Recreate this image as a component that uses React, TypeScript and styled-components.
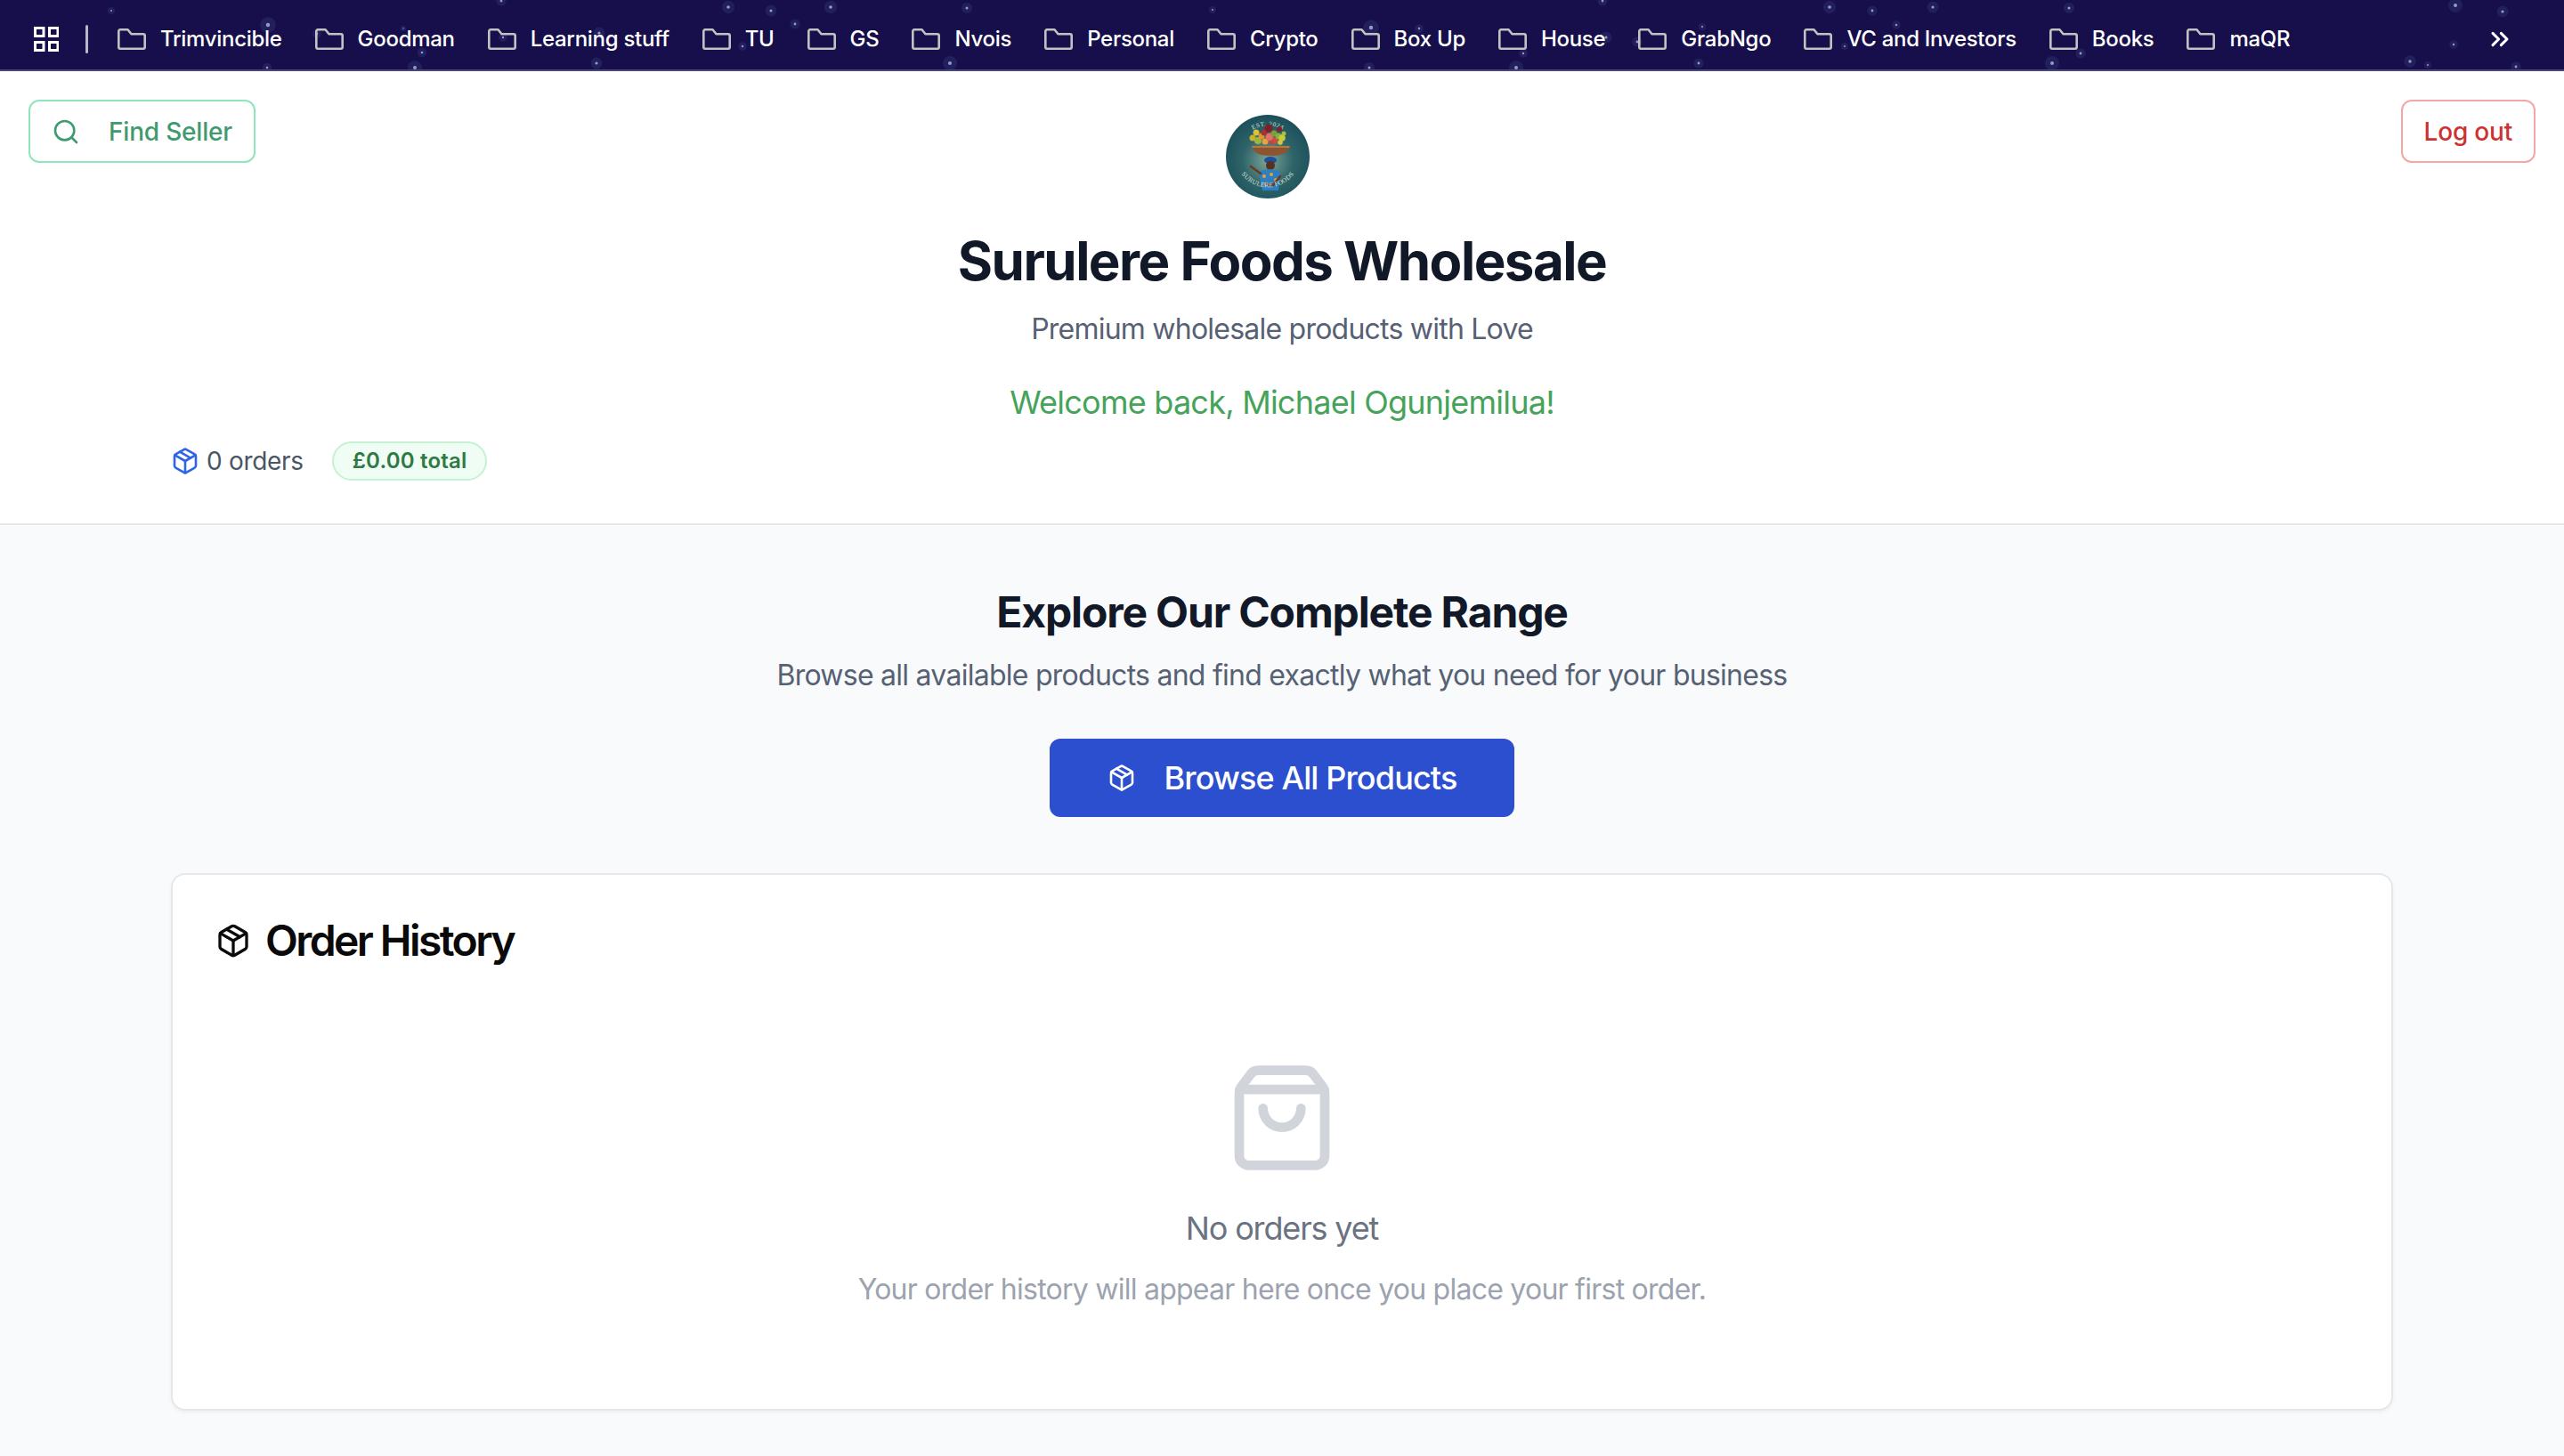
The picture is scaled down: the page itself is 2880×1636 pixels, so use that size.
import React from 'react';
import styled, { createGlobalStyle } from 'styled-components';
import { ChevronsRight, Package, Search, ShoppingBag } from 'lucide-react';

const Global = createGlobalStyle`
  html, body { margin: 0; padding: 0; height: 100%; background: #f9fafb; }
  body { font-family: Inter, "Liberation Sans", sans-serif; overflow: hidden; -webkit-font-smoothing: antialiased; }
  * { box-sizing: border-box; }
`;

const Page = styled.div`
  display: flex;
  flex-direction: column;
  height: 1636px;
  background: #f9fafb;
`;

const BookmarkBar = styled.nav`
  position: relative;
  flex: none;
  display: flex;
  align-items: center;
  height: 80px;
  padding: 10px 38px 0;
  background: #170f4b;
  border-bottom: 2px solid #4c4672;
  overflow: hidden;
`;

const StarField = styled.svg`
  position: absolute;
  inset: 0;
  width: 2880px;
  height: 78px;
`;

const AppsIcon = styled.svg`
  position: relative;
  flex: none;
`;

const Divider = styled.span`
  position: relative;
  flex: none;
  width: 3px;
  height: 32px;
  margin: 0 33px 0 30px;
  border-radius: 2px;
  background: #b9b7c9;
`;

const Bookmarks = styled.div`
  position: relative;
  display: flex;
  align-items: center;
  gap: 37px;
`;

const Bookmark = styled.a`
  display: flex;
  align-items: center;
  gap: 16px;
  color: #fff;
  font-size: 24px;
  line-height: 32px;
  font-weight: 500;
  letter-spacing: -0.29px;
  white-space: nowrap;
`;

const FolderIcon = styled.svg`
  flex: none;
`;

const OverflowIcon = styled(ChevronsRight)`
  position: absolute;
  right: 56px;
  top: 28px;
  color: #fff;
`;

const Header = styled.header`
  flex: none;
  height: 510px;
  padding: 32px 32px 0;
  background: #fff;
  border-bottom: 2px solid #e5e7eb;
`;

const HeaderTop = styled.div`
  display: grid;
  grid-template-columns: 1fr auto 1fr;
  align-items: start;
`;

const OutlineButton = styled.button<{ $tone: 'green' | 'red' }>`
  display: inline-flex;
  align-items: center;
  gap: 32px;
  height: 71px;
  padding: 0 24px;
  background: #fff;
  border: 2px solid ${p => (p.$tone === 'green' ? '#8fe6bd' : '#f5a6a6')};
  border-radius: 12px;
  color: ${p => (p.$tone === 'green' ? '#3f9a6e' : '#cd3232')};
  font: 500 28px/40px Inter, sans-serif;
  letter-spacing: -0.2px;
`;

const RightSlot = styled.div`
  display: flex;
  justify-content: flex-end;
`;

const Brand = styled.div`
  display: flex;
  flex-direction: column;
  align-items: center;
  padding-top: 16px;
`;

const LogoMark = styled.svg`
  display: block;
  margin-right: 32px;
  margin-bottom: 33px;
`;

const Title = styled.h1`
  margin: 0;
  color: #111827;
  font-size: 60px;
  line-height: 72px;
  font-weight: 700;
  letter-spacing: -1.52px;
`;

const Tagline = styled.p`
  margin: 17px 0 0;
  color: #566173;
  font-size: 32px;
  line-height: 48px;
  letter-spacing: -0.77px;
`;

const Welcome = styled.p`
  margin: 34px 0 0;
  color: #46a35a;
  font-size: 36px;
  line-height: 48px;
  font-weight: 400;
  letter-spacing: -0.76px;
`;

const Stats = styled.div`
  display: flex;
  align-items: center;
  margin: 20px 0 0 160px;
  height: 44px;
`;

const OrderCount = styled.span`
  display: flex;
  align-items: center;
  gap: 8px;
  color: #4b5563;
  font-size: 28px;
  line-height: 40px;
  letter-spacing: -0.3px;
`;

const BlueBox = styled(Package)`
  color: #2f63ea;
`;

const TotalBadge = styled.span`
  display: inline-flex;
  align-items: center;
  height: 44px;
  margin-left: 32px;
  padding: 0 21px;
  border: 2px solid #c4f2d2;
  border-radius: 22px;
  background: #f0fdf4;
  color: #2f7a44;
  font-size: 24px;
  line-height: 32px;
  font-weight: 600;
  letter-spacing: 0.2px;
`;

const Main = styled.main`
  flex: 1;
  display: flex;
  flex-direction: column;
  align-items: center;
  padding: 0 192px;
`;

const Explore = styled.h2`
  margin: 66px 0 0;
  color: #111827;
  font-size: 48px;
  line-height: 64px;
  font-weight: 700;
  letter-spacing: -1.15px;
`;

const ExploreText = styled.p`
  margin: 15px 0 0;
  color: #566173;
  font-size: 32px;
  line-height: 48px;
  letter-spacing: -0.74px;
`;

const PrimaryButton = styled.button`
  display: flex;
  align-items: center;
  gap: 32px;
  height: 88px;
  margin-top: 47px;
  padding: 0 65px;
  border: 0;
  border-radius: 12px;
  background: #2c4fd0;
  color: #fff;
  font: 500 36px/48px Inter, sans-serif;
  letter-spacing: -0.87px;
`;

const HistoryCard = styled.section`
  align-self: stretch;
  display: flex;
  flex-direction: column;
  height: 604px;
  margin-top: 63px;
  padding: 48px;
  background: #fff;
  border: 2px solid #e5e7eb;
  border-radius: 16px;
  box-shadow: 0 2px 4px rgba(0, 0, 0, 0.05);
`;

const CardTitle = styled.h3`
  display: flex;
  align-items: center;
  gap: 16px;
  margin: 0;
  color: #0a0a0a;
  font-size: 48px;
  line-height: 52px;
  font-weight: 600;
  letter-spacing: -2.6px;
`;

const Empty = styled.div`
  display: flex;
  flex-direction: column;
  align-items: center;
  padding-top: 109px;
`;

const EmptyIcon = styled(ShoppingBag)`
  color: #d1d5db;
`;

const EmptyTitle = styled.p`
  margin: 36px 0 0;
  color: #6b7280;
  font-size: 36px;
  line-height: 48px;
  font-weight: 400;
  letter-spacing: -1.16px;
`;

const EmptyText = styled.p`
  margin: 21px 0 0;
  color: #9ca3af;
  font-size: 32px;
  line-height: 48px;
  letter-spacing: -0.75px;
`;

const bookmarks = ['Trimvincible', 'Goodman', 'Learning stuff', 'TU', 'GS', 'Nvois', 'Personal', 'Crypto', 'Box Up', 'House', 'GrabNgo', 'VC and Investors', 'Books', 'maQR'];

const stars: [number, number, number][] = [
  [301, 28, 2.2], [125, 12, 1], [563, 1, 1.4], [818, 8, 1.8], [866, 12, 1.6], [893, 27, 1.4], [356, 38, 1.2], [565, 42, 1.2], [673, 37, 1.6],
  [474, 59, 1.3], [466, 76, 2], [300, 76, 1.3], [670, 71, 1.6], [834, 52, 1.2], [453, 32, 0.8],
  [933, 8, 1.8], [1086, 9, 1.5], [1362, 11, 1], [1800, 1, 1.4], [1540, 31, 2.2], [1594, 32, 1.2], [1067, 71, 2], [1538, 76, 1.5], [1703, 76, 2],
  [1711, 60, 1.2], [1804, 42, 1.6], [1839, 47, 1.4],
  [2055, 8, 1.8], [2103, 12, 1.4], [2171, 8, 1.6], [2324, 9, 1.5], [2758, 6, 2], [2811, 13, 1.6], [2130, 28, 1.2], [2072, 52, 1], [1908, 71, 1.4],
  [2305, 71, 2], [2337, 60, 1.4], [2756, 50, 1.2], [2707, 69, 1.7], [2727, 73, 1], [2826, 75, 1.4], [1912, 30, 1],
];

const fruits: [number, number, number, string][] = [
  [31, 27, 3.5, '#c9b32e'], [35, 21, 3.5, '#d8c23a'], [37, 30, 4, '#9fb53b'], [41, 25, 3.5, '#e0962f'], [45, 31, 3.5, '#e8a33a'],
  [44, 21, 3.5, '#a7322e'], [49, 16, 4.5, '#7f1f2a'], [50, 26, 4.5, '#e36f6a'], [55, 22, 3.5, '#7f9d3a'], [56, 30, 3.5, '#c9503f'],
  [60, 25, 3.5, '#8cae3a'], [61, 17, 3, '#7d2230'], [64, 27, 3.8, '#c7cc3f'], [66, 22, 2.5, '#a9bf3d'], [62, 32, 2.8, '#d9c83f'], [52, 32, 2.5, '#c4463e'],
];

function Logo() {
  return (
    <LogoMark width={96} height={96} viewBox="0 0 96 96">
      <defs>
        <radialGradient id="logoBg" cx="50%" cy="55%" r="55%">
          <stop offset="0%" stopColor="#7ea597" />
          <stop offset="55%" stopColor="#2f6469" />
          <stop offset="100%" stopColor="#1c4f5b" />
        </radialGradient>
        <path id="logoTop" d="M26 22 A32 32 0 0 1 70 22" />
        <path id="logoBottom" d="M12 54 A37 37 0 0 0 84 54" />
      </defs>
      <circle cx="48" cy="48" r="47" fill="url(#logoBg)" />
      <text fontFamily="Liberation Serif, serif" fontSize="7" fill="#d6e2d8" letterSpacing="0.6">
        <textPath href="#logoTop" startOffset="50%" textAnchor="middle">EST. 2024</textPath>
      </text>
      {fruits.map(([cx, cy, r, fill]) => (
        <circle key={`${cx}-${cy}`} cx={cx} cy={cy} r={r} fill={fill} />
      ))}
      <path d="M30 36 H73 C71 44 64 47 52 47 C39 47 32 44 30 36Z" fill="#8c5430" />
      <path d="M30 36 H73 L72 38 H31Z" fill="#b57a44" />
      <ellipse cx="51" cy="52" rx="7" ry="4" fill="#1c4f9c" />
      <circle cx="51" cy="58" r="5" fill="#5b2f1e" />
      <path d="M38 66 C42 61 58 61 62 66 L60 86 L42 86Z" fill="#2e7fc0" />
      <path d="M40 67 L33 62 L29 59" fill="none" stroke="#6b3a22" strokeWidth="2.6" strokeLinecap="round" />
      <circle cx="44" cy="70" r="2" fill="#e0a33a" />
      <circle cx="52" cy="68" r="2" fill="#e0a33a" />
      <circle cx="57" cy="74" r="2" fill="#e0a33a" />
      <circle cx="46" cy="79" r="2" fill="#e0a33a" />
      <path d="M62 70 L54 80 L46 79" fill="none" stroke="#6b3a22" strokeWidth="2.6" strokeLinecap="round" />
      <text fontFamily="Liberation Serif, serif" fontSize="7.4" fill="#d6e2d8" letterSpacing="0.3">
        <textPath href="#logoBottom" startOffset="50%" textAnchor="middle">SURULERE FOODS</textPath>
      </text>
    </LogoMark>
  );
}

function Apps() {
  return (
    <AppsIcon width={28} height={28} viewBox="0 0 28 28" fill="none" stroke="#fff" strokeWidth="3">
      <rect x="1.5" y="1.5" width="9.5" height="9" />
      <rect x="17.5" y="1.5" width="9.5" height="9" />
      <rect x="1.5" y="17.5" width="9.5" height="9" />
      <rect x="17.5" y="17.5" width="9.5" height="9" />
    </AppsIcon>
  );
}

function BookmarkFolder() {
  return (
    <FolderIcon width={32} height={24} viewBox="0 0 32 24" fill="none" stroke="#c2c2c2" strokeWidth="2.6" strokeLinejoin="round">
      <path d="M1.3 3 A1.7 1.7 0 0 1 3 1.3 H11.5 L15.5 6.3 H29 A1.7 1.7 0 0 1 30.7 8 V21 A1.7 1.7 0 0 1 29 22.7 H3 A1.7 1.7 0 0 1 1.3 21 Z" />
    </FolderIcon>
  );
}

export default function App() {
  return (
    <Page>
      <Global />
      <BookmarkBar>
        <StarField viewBox="0 0 2880 78">
          {stars.map(([x, y, r]) => (
            <g key={`${x}-${y}`}>
              <circle cx={x} cy={y} r={r * 4} fill="#5b6bb5" opacity={0.18} />
              <circle cx={x} cy={y} r={r} fill="#c6cbe6" opacity={0.72} />
            </g>
          ))}
        </StarField>
        <Apps />
        <Divider />
        <Bookmarks>
          {bookmarks.map(name => (
            <Bookmark key={name}>
              <BookmarkFolder />
              {name}
            </Bookmark>
          ))}
        </Bookmarks>
        <OverflowIcon size={32} strokeWidth={3} absoluteStrokeWidth />
      </BookmarkBar>
      <Header>
        <HeaderTop>
          <div>
            <OutlineButton $tone="green">
              <Search size={32} strokeWidth={2.6} absoluteStrokeWidth />
              Find Seller
            </OutlineButton>
          </div>
          <Brand>
            <Logo />
            <Title>Surulere Foods Wholesale</Title>
            <Tagline>Premium wholesale products with Love</Tagline>
            <Welcome>Welcome back, Michael Ogunjemilua!</Welcome>
          </Brand>
          <RightSlot>
            <OutlineButton $tone="red">Log out</OutlineButton>
          </RightSlot>
        </HeaderTop>
        <Stats>
          <OrderCount>
            <BlueBox size={32} strokeWidth={2.6} absoluteStrokeWidth />
            0 orders
          </OrderCount>
          <TotalBadge>£0.00 total</TotalBadge>
        </Stats>
      </Header>
      <Main>
        <Explore>Explore Our Complete Range</Explore>
        <ExploreText>Browse all available products and find exactly what you need for your business</ExploreText>
        <PrimaryButton>
          <Package size={32} strokeWidth={2.6} absoluteStrokeWidth />
          Browse All Products
        </PrimaryButton>
        <HistoryCard>
          <CardTitle>
            <Package size={40} strokeWidth={3.3} absoluteStrokeWidth />
            Order History
          </CardTitle>
          <Empty>
            <EmptyIcon size={128} strokeWidth={2} />
            <EmptyTitle>No orders yet</EmptyTitle>
            <EmptyText>Your order history will appear here once you place your first order.</EmptyText>
          </Empty>
        </HistoryCard>
      </Main>
    </Page>
  );
}
